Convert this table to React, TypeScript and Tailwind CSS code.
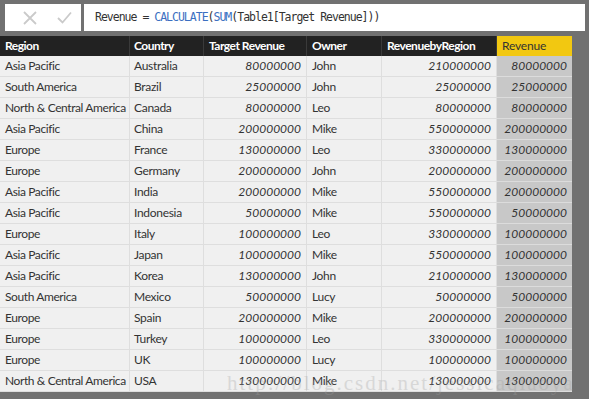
import React from "react";

const rows: [string, string, string, string, string, string][] = [
  ["Asia Pacific", "Australia", "80000000", "John", "210000000", "80000000"],
  ["South America", "Brazil", "25000000", "John", "25000000", "25000000"],
  ["North & Central America", "Canada", "80000000", "Leo", "80000000", "80000000"],
  ["Asia Pacific", "China", "200000000", "Mike", "550000000", "200000000"],
  ["Europe", "France", "130000000", "Leo", "330000000", "130000000"],
  ["Europe", "Germany", "200000000", "John", "200000000", "200000000"],
  ["Asia Pacific", "India", "200000000", "Mike", "550000000", "200000000"],
  ["Asia Pacific", "Indonesia", "50000000", "Mike", "550000000", "50000000"],
  ["Europe", "Italy", "100000000", "Leo", "330000000", "100000000"],
  ["Asia Pacific", "Japan", "100000000", "Mike", "550000000", "100000000"],
  ["Asia Pacific", "Korea", "130000000", "John", "210000000", "130000000"],
  ["South America", "Mexico", "50000000", "Lucy", "50000000", "50000000"],
  ["Europe", "Spain", "200000000", "Mike", "200000000", "200000000"],
  ["Europe", "Turkey", "100000000", "Leo", "330000000", "100000000"],
  ["Europe", "UK", "100000000", "Lucy", "100000000", "100000000"],
  ["North & Central America", "USA", "130000000", "Mike", "130000000", "130000000"],
];

const grid = "grid grid-cols-[130px_74px_103px_75px_115px_75px]";

export default function App() {
  return (
    <div
      className="relative w-[589px] h-[399px] overflow-hidden bg-[#717171]"
      style={{ fontFamily: 'Lato, "Noto Sans", sans-serif' }}
    >
      {/* formula bar */}
      <div className="flex pt-[4px] pl-[5px] pr-[4px] gap-[3px]">
        <div className="w-[76px] h-[27px] bg-white flex items-center">
          <svg width="14" height="14" viewBox="0 0 14 14" className="ml-[18px]">
            <path d="M1 1 L13 13 M13 1 L1 13" stroke="#cacaca" strokeWidth="1.8" fill="none" />
          </svg>
          <svg width="15" height="13" viewBox="0 0 15 13" className="ml-[20px]">
            <path d="M1 7 L5.5 11.5 L14 1.5" stroke="#cacaca" strokeWidth="1.8" fill="none" />
          </svg>
        </div>
        <div className="flex-1 h-[27px] bg-white flex items-center pl-[11px]">
          <span
            className="text-[11.5px] tracking-[-1px] text-[#333333] whitespace-pre"
            style={{ fontFamily: '"DejaVu Sans Mono", "Liberation Mono", monospace' }}
          >
            Revenue = <span className="text-[#3b6fc1]">CALCULATE</span>(
            <span className="text-[#3b6fc1]">SUM</span>(Table1[Target Revenue]))
          </span>
        </div>
      </div>

      {/* table */}
      <div className="mt-[5px] w-[572px] text-[12px] leading-none">
        <div className={`${grid} h-[20px] bg-[#222222] text-white font-bold tracking-[-0.5px]`}>
          <div className="border-r border-[#3a3a3a] flex items-center pl-[5px]">Region</div>
          <div className="border-r border-[#3a3a3a] flex items-center pl-[4px]">Country</div>
          <div className="border-r border-[#3a3a3a] flex items-center pl-[5px]">Target Revenue</div>
          <div className="border-r border-[#3a3a3a] flex items-center pl-[5px]">Owner</div>
          <div className="border-r border-[#3a3a3a] flex items-center pl-[5px]">RevenuebyRegion</div>
          <div className="bg-[#f2c811] text-[#333333] font-normal tracking-[-0.2px] flex items-center pl-[5px]">Revenue</div>
        </div>
        {rows.map((r, i) => (
          <div key={i} className={`${grid} h-[21px] bg-[#f0f0f0] text-[#333333]`}>
            <div className="border-r border-b border-[#dedede] flex items-center pl-[5px] whitespace-nowrap tracking-[-0.4px]">{r[0]}</div>
            <div className="border-r border-b border-[#dedede] flex items-center pl-[4px] tracking-[-0.3px]">{r[1]}</div>
            <div className="border-r border-b border-[#dedede] flex items-center justify-end pr-[5px] italic">{r[2]}</div>
            <div className="border-r border-b border-[#dedede] flex items-center pl-[5px] tracking-[-0.3px]">{r[3]}</div>
            <div className="border-r border-b border-[#dedede] flex items-center justify-end pr-[5px] italic">{r[4]}</div>
            <div className="bg-[#c8c8c8] border-b border-[#dcdcdc] flex items-center justify-end pr-[5px] italic">{r[5]}</div>
          </div>
        ))}
      </div>

      {/* watermark */}
      <div
        className="absolute left-[227px] top-[368px] text-[21px] tracking-[2px] text-[#a0a0a0] opacity-30 whitespace-nowrap pointer-events-none"
        style={{ fontFamily: '"Liberation Serif", "DejaVu Serif", serif' }}
      >
        http://blog.csdn.net/jessicaqiaoya
      </div>
    </div>
  );
}
